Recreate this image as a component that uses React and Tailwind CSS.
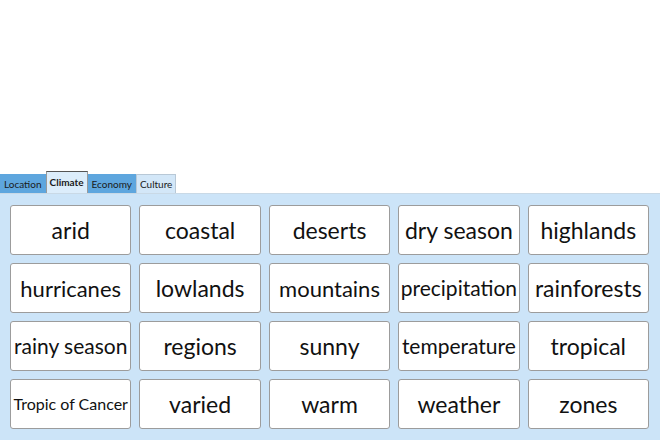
const tabs = [
  { label: 'Location', cls: 'bg-[#5ea6de] border-[#5ea6de] mt-[3px]' },
  { label: 'Climate', cls: 'bg-[#dcedfb] border-[#9a9a9a] border-t-[#555] font-bold' },
  { label: 'Economy', cls: 'bg-[#5ea6de] border-[#5ea6de] mt-[3px]' },
  { label: 'Culture', cls: 'bg-[#d3e7f8] border-[#b8c8d6] mt-[3px]' },
];

const words = [
  ['arid', 'text-[23px]'],
  ['coastal', 'text-[23px]'],
  ['deserts', 'text-[23px]'],
  ['dry season', 'text-[23px]'],
  ['highlands', 'text-[23px]'],
  ['hurricanes', 'text-[22px]'],
  ['lowlands', 'text-[23px]'],
  ['mountains', 'text-[22px]'],
  ['precipitation', 'text-[21px]'],
  ['rainforests', 'text-[23px]'],
  ['rainy season', 'text-[21px]'],
  ['regions', 'text-[23px]'],
  ['sunny', 'text-[23px]'],
  ['temperature', 'text-[21px]'],
  ['tropical', 'text-[23px]'],
  ['Tropic of Cancer', 'text-[16px]'],
  ['varied', 'text-[23px]'],
  ['warm', 'text-[23px]'],
  ['weather', 'text-[23px]'],
  ['zones', 'text-[23px]'],
];

export default function App() {
  return (
    <div className="w-[660px] h-[440px] bg-white flex flex-col overflow-hidden">
      <div className="h-[171px]" />

      {/* tab strip */}
      <div className="flex items-start h-[22px] font-['Lato',sans-serif] text-[10px] text-[#1a1a1a]">
        {tabs.map(t => (
          <div key={t.label} className={`border border-b-0 px-[3px] flex items-center ${t.cls} ${t.label === 'Climate' ? 'h-[22px]' : 'h-[19px]'}`}>
            {t.label}
          </div>
        ))}
      </div>

      {/* word panel */}
      <div className="flex-1 bg-[#cce4f8] border-t border-[#c9d9e6] pt-[11px] pl-[10px] pr-[11px]">
        <div className="grid grid-cols-5 gap-x-2 gap-y-2">
          {words.map(([w, size]) => (
            <div key={w}
              className={`h-[50px] bg-white border border-[#9c9c9c] rounded-[3px] flex items-center justify-center whitespace-nowrap text-[#111] font-['Lato',sans-serif] ${size}`}>
              {w}
            </div>
          ))}
        </div>
      </div>
    </div>
  );
}
